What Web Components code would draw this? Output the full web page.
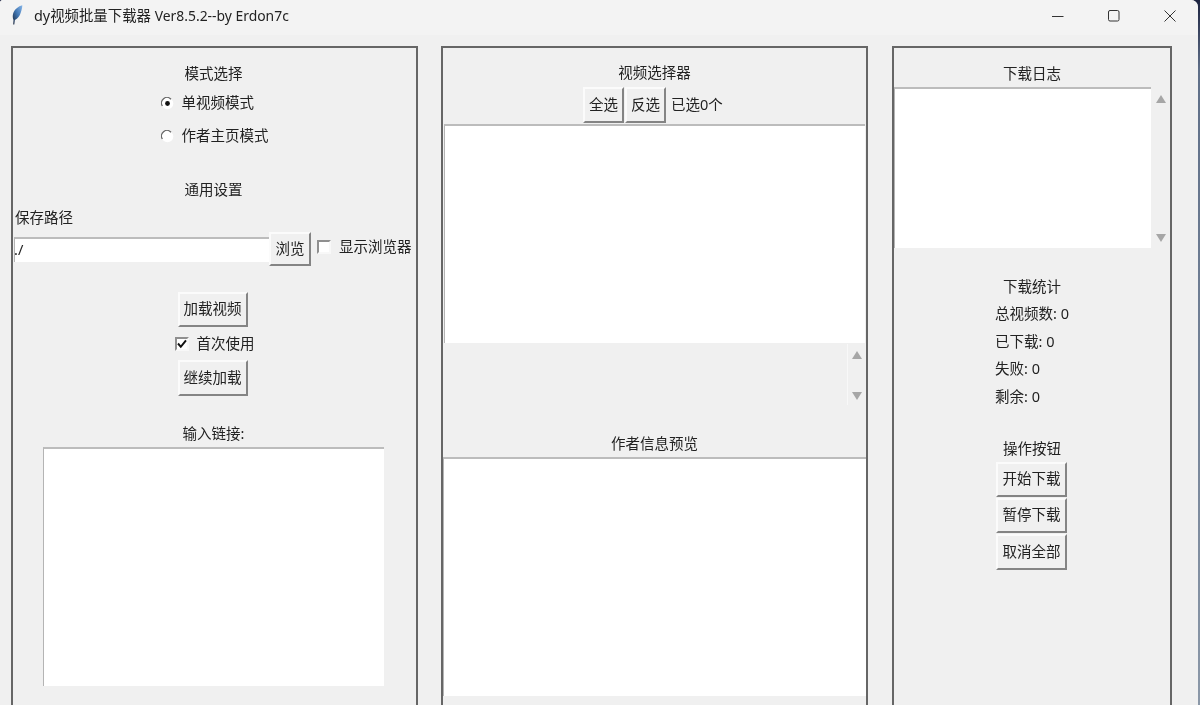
<!DOCTYPE html>
<html lang="zh-CN"><head><meta charset="utf-8"><title>dy视频批量下载器</title>
<style>
html,body{margin:0;height:705px;overflow:hidden;background:linear-gradient(#1c2340,#5f6f88 70px,#8b98a8 705px)}
body{font:14.5px/20px "Noto Sans","Noto Sans CJK SC",sans-serif;color:#222}
</style></head><body>
<app-window>
  <title-bar slot="bar">dy视频批量下载器 <span>Ver8.5.2--by Erdon7c</span></title-bar>
  <left-panel></left-panel>
  <middle-panel></middle-panel>
  <right-panel></right-panel>
</app-window>
<script>
const TEXT=`filter:blur(.35px);white-space:nowrap;`;
function def(name,html){
  customElements.define(name,class extends HTMLElement{
    constructor(){super();this.attachShadow({mode:'open'}).innerHTML=html;}
  });
}
def('app-window',`<style>
:host{display:block;height:705px;background:#f0f0f0;overflow:hidden;border-radius:3px 7px 0 0;margin-right:2px}
.main{display:flex;align-items:flex-start;padding:11px 0 0 11px}
::slotted(left-panel){margin-right:23px}
::slotted(middle-panel){margin-right:24px}
</style><slot name="bar"></slot><div class="main"><slot></slot></div>`);

def('title-bar',`<style>
:host{display:flex;align-items:flex-start;height:35px;background:#f3f3f3;font-size:14.4px;color:#222}
.ic{margin:5px 0 0 12px;width:11px;height:20px;flex:none;filter:blur(.3px)}
.t{margin:6px 0 0 11px;flex:1;${TEXT}}
::slotted(span){font-size:13.9px}
.b{width:56px;height:12px;margin-top:10px;display:flex;align-items:center;justify-content:center}
svg{display:block}
</style>
<svg class="ic" viewBox="0 0 11 20"><defs><linearGradient id="f" x1="1" y1="0" x2="0" y2="1"><stop offset="0" stop-color="#86b6ea"/><stop offset=".5" stop-color="#3f74b0"/><stop offset="1" stop-color="#1a2438"/></linearGradient></defs>
<path d="M10.300 .2C6.500 1.200 2.400 4.300 1.200 8.300C.5 10.700 .6 13 1.500 15L1.200 19.500L2.300 19.500L2.900 15C5.800 13.800 7.800 10.800 8.800 7.500C9.600 5 10.300 2.500 10.300 .2Z" fill="url(#f)"/></svg>
<span class="t"><slot></slot></span>
<span class="b"><svg width="12" height="12" viewBox="0 0 12 12"><path d="M0 6.500H11.500" stroke="#333" stroke-width="1"/></svg></span>
<span class="b"><svg width="12" height="12" viewBox="0 0 12 12"><rect x=".5" y=".5" width="10.500" height="10.500" rx="1.500" fill="none" stroke="#333"/></svg></span>
<span class="b"><svg width="12" height="12" viewBox="0 0 12 12"><path d="M.5 .5L11.500 11.500M11.500 .5L.5 11.500" stroke="#333" fill="none"/></svg></span>`);

def('tk-label',`<style>:host{display:block;height:20px;line-height:20px}span{display:block;margin-top:-1px;${TEXT}}</style><span><slot></slot></span>`);

def('tk-button',`<style>
:host{display:flex;align-items:center;justify-content:center;box-sizing:border-box;height:35px;background:#f0f0f0;
border:2px solid;border-color:#fbfbfb #848484 #848484 #fbfbfb}
span{padding-bottom:2px;${TEXT}}</style><span><slot></slot></span>`);

def('tk-radio',`<style>
:host{display:flex;align-items:center;height:20px}
svg{margin-right:8px;flex:none;filter:blur(.3px)}span{margin-top:-2px;${TEXT}}
.d{display:none}:host([checked]) .d{display:block}
</style><svg width="13" height="13" viewBox="0 0 13 13">
<circle cx="6.500" cy="6.500" r="5.800" fill="#fff"/>
<path d="M1.400 9A5.500 5.500 0 0 1 10 2.200" fill="none" stroke="#666" stroke-width="1.300"/>
<circle class="d" cx="6.500" cy="6.500" r="2.400" fill="#111"/></svg><span><slot></slot></span>`);

def('tk-check',`<style>
:host{display:flex;align-items:center;height:20px}
.b{box-sizing:border-box;width:14px;height:14px;margin-right:8px;flex:none;background:#fff;border:2px solid;border-color:#8f8f8f #f8f8f8 #f8f8f8 #8f8f8f;display:block}
span{margin-top:-2px;${TEXT}}
svg{display:none}:host([checked]) svg{display:block}
</style><div class="b"><svg width="10" height="10" viewBox="0 0 10 10"><path d="M1 4.500L3.800 7.800L9 1.300" fill="none" stroke="#111" stroke-width="2"/></svg></div><span><slot></slot></span>`);

def('tk-field',`<style>
:host{display:block;box-sizing:border-box;background:#fff;border-top:2px solid #bcbcbc;border-left:1px solid #b4b4b4;height:100px}
span{display:block;${TEXT}line-height:21px;margin-left:-1px}</style><span><slot></slot></span>`);

def('tk-scrollbar',`<style>
:host{display:flex;flex-direction:column;justify-content:space-between;align-items:center;box-sizing:border-box}
svg{display:block;filter:blur(.3px)}</style>
<svg width="10" height="8" viewBox="0 0 10 8"><path d="M5 0L10 8H0Z" fill="#a6a6a6"/></svg>
<svg width="10" height="8" viewBox="0 0 10 8"><path d="M5 8L10 0H0Z" fill="#a6a6a6"/></svg>`);

def('tk-panel',`<style>
:host{display:flex;flex-direction:column;box-sizing:border-box;height:680px;border:2px solid #666;align-items:center;flex:none}
</style><slot></slot>`);

def('left-panel',`<style>
:host{display:block;flex:none}
tk-panel{width:407px}
.radios{margin-top:9px;display:flex;flex-direction:column;gap:13px;align-items:flex-start}
.path{align-self:flex-start;margin:8px 0 0 2px}
.row{align-self:stretch;display:flex;align-items:flex-start;margin-top:4px;height:34px}
.c{margin-right:2px}
.s2{width:70px;margin-right:4px}
</style><tk-panel>
<tk-label class="c" style="margin-top:16px">模式选择</tk-label>
<div class="radios"><tk-radio checked>单视频模式</tk-radio><tk-radio>作者主页模式</tk-radio></div>
<tk-label class="c" style="margin-top:34px">通用设置</tk-label>
<tk-label class="path">保存路径</tk-label>
<div class="row">
<tk-field style="width:255px;height:25px;margin:5px 0 0 1px">./</tk-field>
<tk-button style="width:42px;height:34px">浏览</tk-button>
<tk-check style="margin:5px 0 0 6px">显示浏览器</tk-check>
</div>
<tk-button class="s2" style="margin-top:26px"><span style="display:block;margin-bottom:1px">加载视频</span></tk-button>
<tk-check checked style="margin-top:7px">首次使用</tk-check>
<tk-button class="s2" style="height:36px;margin-top:6px">继续加载</tk-button>
<tk-label class="c" style="margin-top:28px">输入链接:</tk-label>
<tk-field style="align-self:flex-start;width:341px;height:239px;margin:3px 0 0 30px"></tk-field>
</tk-panel>`);

def('middle-panel',`<style>
:host{display:block;flex:none}
tk-panel{width:427px}
.row{display:flex;align-items:center;align-self:flex-start;margin:4px 0 0 140px;height:36px}
.row tk-button{width:41px;height:36px;margin-right:1px}
tk-scrollbar{align-self:flex-end;width:19px;height:61px;margin:1px 0 0;border-left:1px solid #f8f8f8;padding:7px 0 5px}
</style><tk-panel>
<tk-label style="margin-top:15px">视频选择器</tk-label>
<div class="row"><tk-button>全选</tk-button><tk-button>反选</tk-button><tk-label style="margin-left:4px">已选0个</tk-label></div>
<tk-field style="align-self:flex-start;width:421px;height:219px;margin:1px 0 0 1px"></tk-field>
<tk-scrollbar></tk-scrollbar>
<tk-label style="margin-top:29px">作者信息预览</tk-label>
<tk-field style="align-self:stretch;height:239px;margin-top:3px"></tk-field>
</tk-panel>`);

def('right-panel',`<style>
:host{display:block;flex:none}
tk-panel{width:280px}
.log{align-self:stretch;display:flex;margin-top:3px;height:161px}
tk-scrollbar{flex:1;padding:8px 0 6px}
.stats{display:flex;flex-direction:column;align-items:flex-start;gap:7.670px;margin-top:7px;width:74px}
tk-button{width:71px;margin:1px 1px 0 0}
</style><tk-panel>
<tk-label style="margin-top:16px">下载日志</tk-label>
<div class="log"><tk-field style="width:257px;height:161px"></tk-field><tk-scrollbar></tk-scrollbar></div>
<tk-label style="margin-top:29px">下载统计</tk-label>
<div class="stats"><tk-label>总视频数: 0</tk-label><tk-label>已下载: 0</tk-label><tk-label>失败: 0</tk-label><tk-label>剩余: 0</tk-label></div>
<tk-label style="margin-top:32px">操作按钮</tk-label>
<tk-button style="margin-top:3px">开始下载</tk-button>
<tk-button>暂停下载</tk-button>
<tk-button style="height:36px">取消全部</tk-button>
</tk-panel>`);
</script>
</body></html>
